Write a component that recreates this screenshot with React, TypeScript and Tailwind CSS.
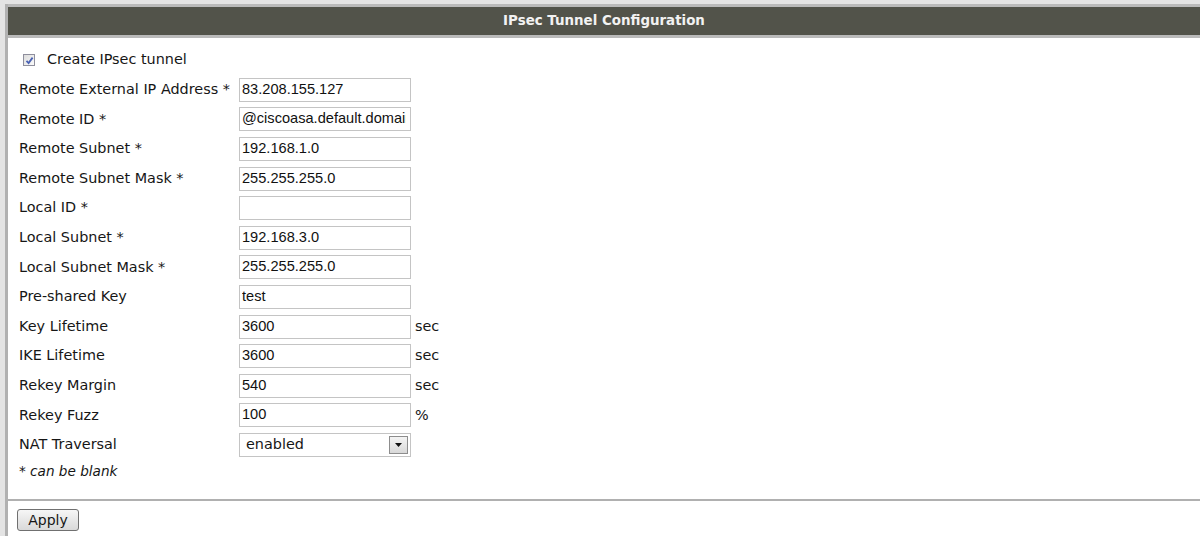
import React from "react";

type Row = { label: string; value: string; unit?: string };

const rows: Row[] = [
  { label: "Remote External IP Address *", value: "83.208.155.127" },
  { label: "Remote ID *", value: "@ciscoasa.default.domain" },
  { label: "Remote Subnet *", value: "192.168.1.0" },
  { label: "Remote Subnet Mask *", value: "255.255.255.0" },
  { label: "Local ID *", value: "" },
  { label: "Local Subnet *", value: "192.168.3.0" },
  { label: "Local Subnet Mask *", value: "255.255.255.0" },
  { label: "Pre-shared Key", value: "test" },
  { label: "Key Lifetime", value: "3600", unit: "sec" },
  { label: "IKE Lifetime", value: "3600", unit: "sec" },
  { label: "Rekey Margin", value: "540", unit: "sec" },
  { label: "Rekey Fuzz", value: "100", unit: "%" },
];

function CheckBox() {
  return (
    <span className="w-[12px] h-[12px] border border-[#8f8f9d] bg-gradient-to-br from-[#dcdcdc] to-[#fbfbfb] flex items-center justify-center">
      <svg width="9" height="9" viewBox="0 0 9 9">
        <path d="M1.5 4.8 L3.6 7 L7.6 1.6" fill="none" stroke="#4a62b4" strokeWidth="1.8" />
      </svg>
    </span>
  );
}

export default function App() {
  const [nat, setNat] = React.useState("enabled");

  return (
    <div className="w-[1200px] h-[536px] bg-[#e4e4e4] pt-[4px] pl-[5px] overflow-hidden font-['DejaVu_Sans',sans-serif] text-[#161616]">
      <div className="h-full bg-white border-l-[3px] border-[#b1b1b1] flex flex-col">
        {/* title bar */}
        <div className="h-[34px] border-t-[3px] border-b-[3px] border-[#bababa] bg-[#52534a] flex items-center justify-center">
          <span className="text-[13.4px] font-bold text-[#f2f2f2]">IPsec Tunnel Configuration</span>
        </div>

        <div className="pl-[11px] pt-[12px] pb-[18px] text-[14.4px]">
          <label className="h-[20px] flex items-center mb-[5px]">
            <span className="ml-[4px] mr-[12px]"><CheckBox /></span>
            Create IPsec tunnel
          </label>

          {rows.map(r => (
            <div key={r.label} className="h-[29.6px] flex items-center">
              <span className="w-[220px] shrink-0">{r.label}</span>
              <input
                type="text"
                defaultValue={r.value}
                className="w-[172px] h-[24px] border border-[#c4c4c4] pl-[2px] pr-[4px] pb-[2px] font-['Liberation_Sans',sans-serif] text-[14.6px] text-[#111] outline-none"
              />
              {r.unit && <span className="ml-[4px]">{r.unit}</span>}
            </div>
          ))}

          <div className="h-[29.6px] flex items-center">
            <span className="w-[220px] shrink-0">NAT Traversal</span>
            <div className="relative w-[172px] h-[24px] border border-[#c4c4c4] bg-white flex items-center">
              <span className="pl-[6px]">{nat}</span>
              <select
                value={nat}
                onChange={e => setNat(e.target.value)}
                className="absolute inset-0 opacity-0"
              >
                <option value="enabled">enabled</option>
                <option value="disabled">disabled</option>
              </select>
              <span className="absolute right-[2px] top-[2px] w-[19px] h-[18px] border border-[#8d8d8d] bg-gradient-to-b from-[#f4f4f4] to-[#d8d8d8] flex items-center justify-center pointer-events-none">
                <svg width="7" height="4" viewBox="0 0 7 4">
                  <path d="M0 0 H7 L3.5 4 Z" fill="#111" />
                </svg>
              </span>
            </div>
          </div>

          <div className="h-[20px] mt-[1px] flex items-center italic text-[13.6px]">* can be blank</div>
        </div>

        <div className="border-t-2 border-[#b0b0b0] pt-[7px] pl-[9px]">
          <button className="w-[62px] h-[22px] rounded-[3px] border border-[#707070] bg-gradient-to-b from-[#f6f6f6] to-[#d9d9d9] text-[14px] leading-none">
            Apply
          </button>
        </div>
      </div>
    </div>
  );
}
